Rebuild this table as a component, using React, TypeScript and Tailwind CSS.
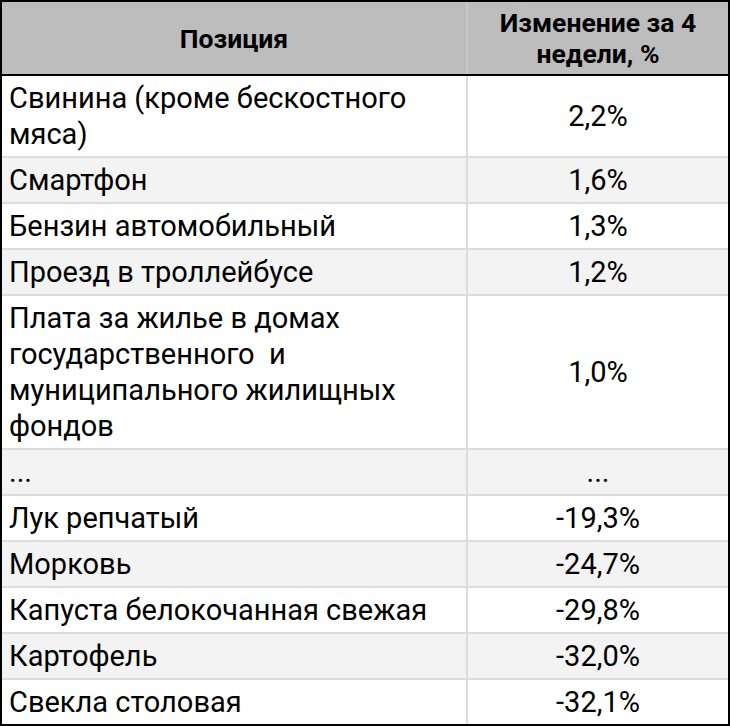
const rows: { name: string[]; value: string; h: string }[] = [
  { name: ["Свинина (кроме бескостного", "мяса)"], value: "2,2%", h: "h-[80px]" },
  { name: ["Смартфон"], value: "1,6%", h: "h-[44px]" },
  { name: ["Бензин автомобильный"], value: "1,3%", h: "h-[44px]" },
  { name: ["Проезд в троллейбусе"], value: "1,2%", h: "h-[44px]" },
  {
    name: [
      "Плата за жилье в домах",
      "государственного  и",
      "муниципального жилищных",
      "фондов",
    ],
    value: "1,0%",
    h: "h-[152px]",
  },
  { name: ["..."], value: "...", h: "h-[44px]" },
  { name: ["Лук репчатый"], value: "-19,3%", h: "h-[44px]" },
  { name: ["Морковь"], value: "-24,7%", h: "h-[44px]" },
  { name: ["Капуста белокочанная свежая"], value: "-29,8%", h: "h-[44px]" },
  { name: ["Картофель"], value: "-32,0%", h: "h-[44px]" },
  { name: ["Свекла столовая"], value: "-32,1%", h: "h-[44px]" },
];

export default function App() {
  return (
    <div className="w-[730px] bg-white font-['Roboto',sans-serif] text-black">
      <div className="border-2 border-black">
        <div className="grid h-[74px] grid-cols-[464px_262px] border-b-2 border-black bg-[#bdbdbd] text-[26.5px] font-bold leading-[31px]">
          <div className="flex items-center justify-center">Позиция</div>
          <div className="flex items-center justify-center border-l-2 border-[#c9c9c9] text-center">
            Изменение за 4
            <br />
            недели, %
          </div>
        </div>

        {rows.map((row, i) => (
          <div
            key={i}
            className={`grid grid-cols-[464px_262px] text-[29px] leading-[36px] ${
              i > 0 ? "border-t-2 border-[#dcdcdc]" : ""
            } ${i % 2 === 1 ? "bg-[#f3f3f3]" : "bg-white"}`}
          >
            <div className={`flex flex-col justify-center pl-[7px] ${row.h}`}>
              {row.name.map((line, j) => (
                <span key={j} className="whitespace-pre">
                  {line}
                </span>
              ))}
            </div>
            <div className="flex items-center justify-center border-l-2 border-[#dcdcdc]">
              {row.value}
            </div>
          </div>
        ))}
      </div>
    </div>
  );
}
